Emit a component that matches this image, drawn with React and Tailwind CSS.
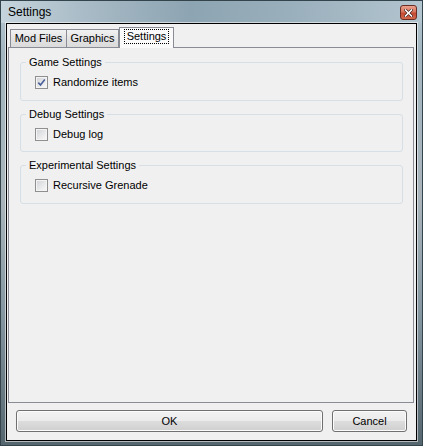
import React from 'react';

const Checkbox = ({ checked }) => (
    <div className="w-[13px] h-[13px] border border-[#8f8f8f] bg-[#f4f4f4] p-[1px] shrink-0">
        <div className="w-full h-full bg-[linear-gradient(135deg,#d3d5d8_0%,#e6e7e9_50%,#f7f7f7_100%)] relative">
            {checked && (
                <svg viewBox="0 0 9 9" className="absolute inset-0 w-[9px] h-[9px]">
                    <path d="M1.3 4.6 L3.5 7 L7.8 1.6" fill="none" stroke="#4a5f99" strokeWidth="1.6" />
                </svg>
            )}
        </div>
    </div>
);

const Group = ({ title, label, checked, height }) => (
    <fieldset className={`border border-[#d5dfe5] rounded-[3px] ${height} px-[14px]`}>
        <legend className="-ml-[9px] px-[3px] leading-[13px] text-black">{title}</legend>
        <div className="flex items-center gap-[5px] mt-[7px]">
            <Checkbox checked={checked} />
            <span className="leading-[13px]">{label}</span>
        </div>
    </fieldset>
);

const Button = ({ children, className }) => (
    <button className={`h-[22px] border border-[#707070] rounded-[3px] bg-[linear-gradient(to_bottom,#f2f2f2_0%,#ebebeb_50%,#dddddd_50%,#cfcfcf_100%)] shadow-[inset_0_0_0_1px_#fbfbfb] text-[11px] text-black ${className}`}>
        {children}
    </button>
);

export default function App() {
    return (
        <div className="w-[423px] h-[446px] flex flex-col px-[5px] pb-[4px] border border-[#34444d] bg-[linear-gradient(to_bottom,#b5c6cf_0%,#a3b6c0_12%,#a9b4ba_45%,#8597a1_70%,#56666f_100%)] font-['Liberation_Sans',Arial,sans-serif] text-[11px] text-black">
            <div className="h-[22px] flex justify-between bg-[linear-gradient(to_right,#c6d4dc_0%,#a8bbc6_20%,#8da4b2_45%,#9ab0bc_70%,#b3c5cf_100%)] -mx-[5px] px-[5px]">
                <span className="pl-[2px] leading-[22px] text-[12px]">Settings</span>
                <div className="mt-[4px] w-[17px] h-[15px] rounded-[3px] border border-[#6a2d22] bg-[linear-gradient(to_bottom,#eba08c_0%,#d8765f_45%,#c44a31_55%,#d26a4f_100%)] flex items-center justify-center">
                    <svg viewBox="0 0 9 8" className="w-[9px] h-[8px]">
                        <path d="M1.5 1 L7.5 7 M7.5 1 L1.5 7" stroke="#3a1a14" strokeWidth="2.8" strokeLinecap="square" />
                        <path d="M1.5 1 L7.5 7 M7.5 1 L1.5 7" stroke="#ffffff" strokeWidth="1.6" strokeLinecap="square" />
                    </svg>
                </div>
            </div>

            <div className="flex-1 flex flex-col border border-black bg-[#f0f0f0] shadow-[0_0_0_1px_rgba(255,255,255,0.55)]">
                <div className="flex-1 flex flex-col ml-[1px] mr-[2px] mt-[2px]">
                    <div className="flex items-end pl-[2px] h-[21px]">
                        <div className="w-[57px] h-[18px] border border-b-0 border-[#898c95] bg-[linear-gradient(to_bottom,#f2f2f2,#e3e3e3_50%,#dbdbdb)] flex items-center justify-center">
                            Mod Files
                        </div>
                        <div className="w-[52px] h-[18px] border border-b-0 border-l-0 border-[#898c95] bg-[linear-gradient(to_bottom,#f2f2f2,#e3e3e3_50%,#dbdbdb)] flex items-center justify-center">
                            Graphics
                        </div>
                        <div className="relative z-10 w-[55px] h-[21px] -mb-[1px] border border-b-0 border-[#898c95] bg-[#fafafa] flex items-start justify-center pt-[1px]">
                            <span className="border border-dotted border-black px-[2px] leading-[13px]">Settings</span>
                        </div>
                    </div>
                    <div className="flex-1 border border-[#898c95] bg-[#f0f0f0] pl-[11px] pr-[10px] pt-[8px] flex flex-col gap-[7px]">
                        <Group title="Game Settings" label="Randomize items" checked height="h-[45px]" />
                        <Group title="Debug Settings" label="Debug log" height="h-[44px]" />
                        <Group title="Experimental Settings" label="Recursive Grenade" height="h-[45px]" />
                    </div>
                </div>
                <div className="flex gap-[9px] px-[9px] mt-[7px] mb-[8px]">
                    <Button className="flex-1">OK</Button>
                    <Button className="w-[75px]">Cancel</Button>
                </div>
            </div>
        </div>
    );
}
